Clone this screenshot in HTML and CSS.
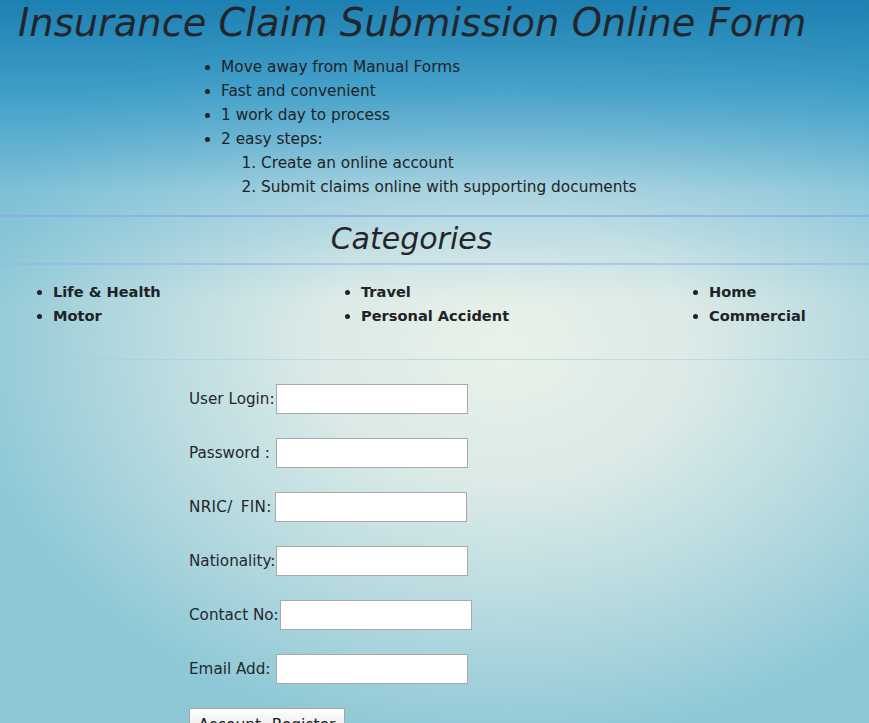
FILE: index.html
```html
<!DOCTYPE html>
<html>
<head>
<meta charset="utf-8">
<title>Insurance Claim Submission Online Form</title>
<link rel="stylesheet" href="styles.css">
</head>
<body>
<div class="page">
  <header class="intro">
    <h1 class="title">Insurance Claim Submission Online Form</h1>
    <ul class="points">
      <li>Move away from Manual Forms</li>
      <li>Fast and convenient</li>
      <li>1 work day to process</li>
      <li>2 easy steps:
        <ol class="steps">
          <li>Create an online account</li>
          <li>Submit claims online with supporting documents</li>
        </ol>
      </li>
    </ul>
  </header>

  <section class="cat-head">
    <h2 class="cat-title">Categories</h2>
  </section>

  <section class="cats">
    <ul class="cat-col">
      <li>Life &amp; Health</li>
      <li>Motor</li>
    </ul>
    <ul class="cat-col">
      <li>Travel</li>
      <li>Personal Accident</li>
    </ul>
    <ul class="cat-col">
      <li>Home</li>
      <li>Commercial</li>
    </ul>
  </section>

  <form class="reg">
    <div class="row"><label class="lbl">User Login:</label><input class="field" type="text"></div>
    <div class="row"><label class="lbl">Password : </label><input class="field" type="password"></div>
    <div class="row"><label class="lbl lbl-wide">NRIC/ FIN:</label><input class="field" type="text"></div>
    <div class="row"><label class="lbl">Nationality:</label><input class="field" type="text"></div>
    <div class="row"><label class="lbl">Contact No:</label><input class="field" type="text"></div>
    <div class="row"><label class="lbl">Email Add: </label><input class="field" type="text"></div>
    <div class="row"><button class="btn" type="button">Account- Register</button></div>
  </form>
</div>
</body>
</html>
```

FILE: styles.css
```css
html, body {
  margin: 0;
  padding: 0;
}
body {
  font-family: "DejaVu Sans", Verdana, sans-serif;
  color: #1f2226;
  min-height: 723px;
  background:
    linear-gradient(180deg, rgba(22,124,176,0.95) 0px, rgba(40,146,196,0.78) 90px, rgba(100,180,215,0.4) 190px, rgba(140,200,220,0) 300px),
    radial-gradient(ellipse 62% 55% at 58% 48%, #e8f2e8 0%, #dbeae7 35%, #b9dbe0 65%, #8ec8d6 100%);
  background-color: #8ac6d4;
  overflow: hidden;
}
.page {
  width: 869px;
  height: 723px;
  overflow: hidden;
}
.intro {
  padding: 0 0 16px 0;
  border-bottom: 2px solid rgba(140,170,232,0.75);
}
.title {
  margin: 0;
  padding-left: 18px;
  font-size: 38.4px;
  font-weight: normal;
  font-style: italic;
  line-height: 46px;
  color: #22262b;
  white-space: nowrap;
}
.points {
  margin: 9px 0 0 0;
  padding-left: 221px;
  font-size: 15.35px;
  line-height: 24px;
}
.steps {
  margin: 0;
  padding-left: 40px;
}
.cat-head {
  height: 46px;
  border-bottom: 2px solid rgba(150,180,235,0.6);
}
.cat-title {
  margin: 0;
  padding: 0 46px 0 0;
  text-align: center;
  font-size: 30px;
  font-weight: normal;
  font-style: italic;
  line-height: 44px;
  color: #22262b;
}
.cats {
  display: grid;
  grid-template-columns: 308px 348px 1fr;
  padding: 15px 0 31px 0;
  border-bottom: 1px solid rgba(170,200,235,0.55);
}
.cat-col {
  margin: 0;
  padding-left: 53px;
  font-size: 14.6px;
  font-weight: bold;
  line-height: 24px;
}
.reg {
  display: flex;
  flex-direction: column;
  gap: 24px;
  padding: 24px 0 0 189px;
  margin: 0;
}
.row {
  display: flex;
  align-items: center;
  height: 30px;
}
.lbl {
  font-size: 15.2px;
  color: #23272b;
  white-space: pre;
}
.lbl-wide {
  word-spacing: 3px;
  letter-spacing: 0.3px;
  margin-right: 2px;
}
.field {
  box-sizing: border-box;
  width: 192px;
  height: 30px;
  margin: 0 0 0 1px;
  border: 1px solid #a9a9a9;
  background: #ffffff;
  padding: 2px 4px;
  font-family: "DejaVu Sans", sans-serif;
}
.btn {
  box-sizing: border-box;
  width: 156px;
  height: 30px;
  align-self: flex-start;
  border: 1px solid #a6a6a6;
  background: linear-gradient(180deg, #ffffff 0%, #f1f1f1 50%, #e3e3e3 100%);
  font-family: "DejaVu Sans", sans-serif;
  font-size: 15.5px;
  line-height: 20px;
  color: #1b1b1b;
  padding: 3px 0 0 0;
  text-align: center;
  display: block;
}
```
